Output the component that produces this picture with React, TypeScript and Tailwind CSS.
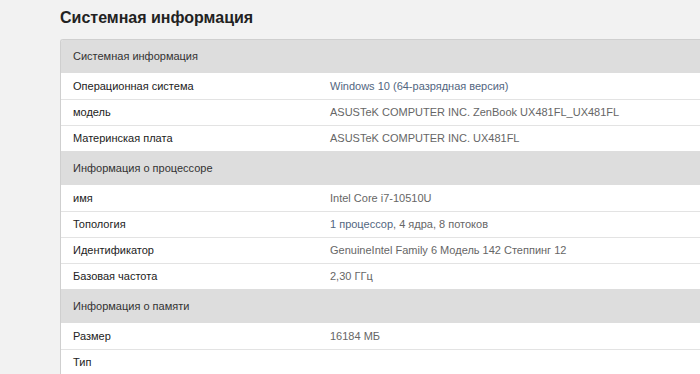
import React from "react";

type Row = { label: string; value: React.ReactNode };
type Section = { title: string; rows: Row[]; h: string };

const link = "text-[#52667f]";

const sections: Section[] = [
  {
    title: "Системная информация",
    h: "h-[33px]",
    rows: [
      { label: "Операционная система", value: <span className={link}>Windows 10 (64-разрядная версия)</span> },
      { label: "модель", value: "ASUSTeK COMPUTER INC. ZenBook UX481FL_UX481FL" },
      { label: "Материнская плата", value: "ASUSTeK COMPUTER INC. UX481FL" },
    ],
  },
  {
    title: "Информация о процессоре",
    h: "h-[34px]",
    rows: [
      { label: "имя", value: "Intel Core i7-10510U" },
      {
        label: "Топология",
        value: (
          <>
            <span className={link}>1 процессор</span>, 4 ядра, 8 потоков
          </>
        ),
      },
      { label: "Идентификатор", value: "GenuineIntel Family 6 Модель 142 Степпинг 12" },
      { label: "Базовая частота", value: "2,30 ГГц" },
    ],
  },
  {
    title: "Информация о памяти",
    h: "h-[34px]",
    rows: [
      { label: "Размер", value: "16184 МБ" },
      { label: "Тип", value: "" },
    ],
  },
];

export default function App() {
  return (
    <div
      className="w-[700px] h-[374px] overflow-hidden bg-[#f2f2f2] pl-[60px]"
      style={{ fontFamily: '"Liberation Sans", Arial, sans-serif' }}
    >
      <h1 className="h-[39px] pt-[8px] text-[16px] leading-[20px] font-bold text-[#222]">
        Системная информация
      </h1>
      <div className="w-[700px] border-l border-t border-[#cfcfcf] rounded-tl-[3px] bg-white overflow-hidden">
        {sections.map((s) => (
          <div key={s.title}>
            <div className={`${s.h} flex items-center bg-[#dddddd] pl-[12px] text-[11px] text-[#333]`}>
              {s.title}
            </div>
            {s.rows.map((r, i) => (
              <div
                key={r.label}
                className={`h-[26px] flex items-center text-[11px] ${i > 0 ? "border-t border-[#e3e3e3]" : ""}`}
              >
                <div className="w-[269px] pl-[12px] text-[#222]">{r.label}</div>
                <div className="text-[#666]">{r.value}</div>
              </div>
            ))}
          </div>
        ))}
      </div>
    </div>
  );
}
